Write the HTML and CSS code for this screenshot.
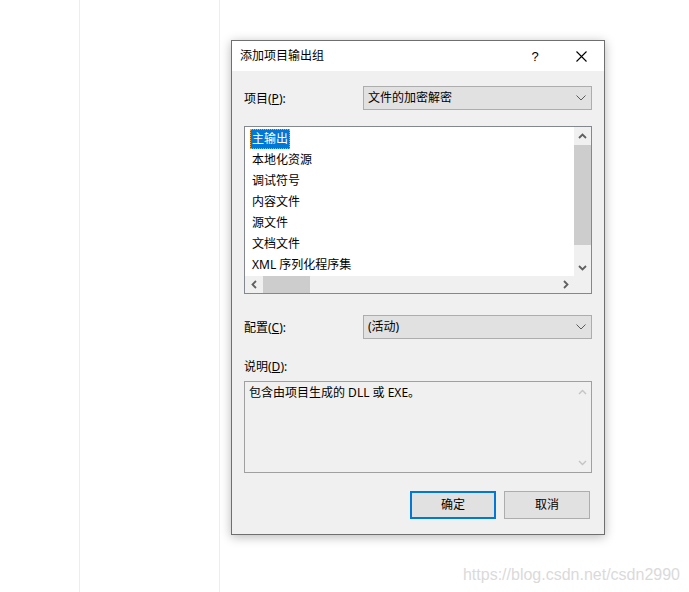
FILE: index.html
```html
<!DOCTYPE html>
<html lang="zh-CN">
<head>
<meta charset="utf-8">
<title>添加项目输出组</title>
<link rel="stylesheet" href="styles.css">
</head>
<body>
<div class="desk">
  <div class="col col-a"></div>
  <div class="col col-b"></div>
  <div class="col-c">
    <div class="dialog">
      <div class="titlebar">
        <span class="title">添加项目输出组</span>
        <span class="tb-btn help">?</span>
        <span class="tb-btn close">
          <svg width="11" height="11" viewBox="0 0 11 11"><path d="M0.5 0.5 L10.5 10.5 M10.5 0.5 L0.5 10.5" stroke="#000" stroke-width="1.1" fill="none"/></svg>
        </span>
      </div>
      <div class="body">
        <div class="row row-project">
          <span class="lbl">项目(<u>P</u>):</span>
          <div class="combo">
            <span class="combo-text">文件的加密解密</span>
            <svg class="combo-arrow" width="10" height="6" viewBox="0 0 10 6"><path d="M0.5 0.5 L5 5 L9.5 0.5" stroke="#5a5a5a" stroke-width="1" fill="none"/></svg>
          </div>
        </div>

        <div class="listbox">
          <div class="items">
            <div class="item"><span class="item-text selected">主输出</span></div>
            <div class="item"><span class="item-text">本地化资源</span></div>
            <div class="item"><span class="item-text">调试符号</span></div>
            <div class="item"><span class="item-text">内容文件</span></div>
            <div class="item"><span class="item-text">源文件</span></div>
            <div class="item"><span class="item-text">文档文件</span></div>
            <div class="item"><span class="item-text">XML 序列化程序集</span></div>
          </div>
          <div class="vscroll">
            <div class="sb-arrow"><svg width="9" height="6" viewBox="0 0 9 6"><path d="M1 5 L4.5 1.5 L8 5" stroke="#606060" stroke-width="1.8" fill="none"/></svg></div>
            <div class="vtrack"><div class="vthumb"></div></div>
            <div class="sb-arrow"><svg width="9" height="6" viewBox="0 0 9 6"><path d="M1 1 L4.5 4.5 L8 1" stroke="#606060" stroke-width="1.8" fill="none"/></svg></div>
          </div>
          <div class="hscroll">
            <div class="sb-arrow"><svg width="6" height="9" viewBox="0 0 6 9"><path d="M5 1 L1.5 4.5 L5 8" stroke="#606060" stroke-width="1.8" fill="none"/></svg></div>
            <div class="htrack"><div class="hthumb"></div></div>
            <div class="sb-arrow"><svg width="6" height="9" viewBox="0 0 6 9"><path d="M1 1 L4.5 4.5 L1 8" stroke="#606060" stroke-width="1.8" fill="none"/></svg></div>
          </div>
          <div class="corner"></div>
        </div>

        <div class="row row-config">
          <span class="lbl">配置(<u>C</u>):</span>
          <div class="combo">
            <span class="combo-text">(活动)</span>
            <svg class="combo-arrow" width="10" height="6" viewBox="0 0 10 6"><path d="M0.5 0.5 L5 5 L9.5 0.5" stroke="#5a5a5a" stroke-width="1" fill="none"/></svg>
          </div>
        </div>

        <div class="desc-label">说明(<u>D</u>):</div>
        <div class="descbox">
          <div class="desc-text">包含由项目生成的 DLL 或 EXE。</div>
          <div class="desc-scroll">
            <svg width="9" height="6" viewBox="0 0 9 6"><path d="M1 5 L4.5 1.5 L8 5" stroke="#c4c4c4" stroke-width="1.4" fill="none"/></svg>
            <svg width="9" height="6" viewBox="0 0 9 6"><path d="M1 1 L4.5 4.5 L8 1" stroke="#c4c4c4" stroke-width="1.4" fill="none"/></svg>
          </div>
        </div>

        <div class="buttons">
          <button class="btn btn-default">确定</button>
          <button class="btn">取消</button>
        </div>
      </div>
    </div>
  </div>
  <div class="watermark">https://blog.csdn.net/csdn2990</div>
</div>
</body>
</html>
```

FILE: styles.css
```css
html, body {
  margin: 0;
  padding: 0;
  background: #ffffff;
}

body {
  width: 689px;
  height: 592px;
  overflow: hidden;
  font-family: "Noto Sans", "Noto Sans CJK SC", sans-serif;
  font-size: 12px;
  color: #000;
}

.desk {
  position: relative;
  display: flex;
  height: 592px;
}

.col {
  height: 592px;
  border-right: 1px solid #e8eef6;
}

.col-a { width: 79px; }
.col-b { width: 139px; }

.col-c {
  padding-left: 11px;
  padding-top: 40px;
}

.dialog {
  box-sizing: border-box;
  width: 374px;
  height: 495px;
  border: 1px solid #6f6f6f;
  background: #f0f0f0;
  box-shadow: 0 2px 10px rgba(0, 0, 0, 0.28);
  display: flex;
  flex-direction: column;
}

.titlebar {
  height: 30px;
  background: #ffffff;
  display: flex;
  align-items: center;
}

.title {
  flex: 1;
  padding-left: 8px;
  line-height: 16px;
}

.tb-btn {
  width: 46px;
  height: 30px;
  display: flex;
  align-items: center;
  justify-content: center;
}

.help {
  font-family: "Liberation Sans", sans-serif;
  font-size: 13px;
}

.body {
  flex: 1;
  padding: 15px 12px 0 12px;
  display: flex;
  flex-direction: column;
}

.row {
  display: flex;
  align-items: center;
  height: 24px;
}

.lbl {
  width: 119px;
  line-height: 16px;
  padding-top: 2px;
}

.combo {
  box-sizing: border-box;
  flex: 1;
  height: 24px;
  border: 1px solid #adadad;
  background: #e1e1e1;
  display: flex;
  align-items: center;
  padding: 0 5px 0 4px;
}

.combo-text {
  flex: 1;
  line-height: 16px;
}

.combo-arrow {
  display: block;
}

.listbox {
  box-sizing: border-box;
  margin-top: 16px;
  height: 168px;
  border: 1px solid #828790;
  background: #ffffff;
  display: grid;
  grid-template-columns: 1fr 17px;
  grid-template-rows: 1fr 17px;
}

.items {
  padding: 1px 0 0 5px;
  overflow: hidden;
}

.item {
  height: 21px;
  display: flex;
  align-items: center;
}

.item-text {
  padding: 0 2px;
  line-height: 20px;
  height: 20px;
  white-space: nowrap;
}

.item-text.selected {
  background: #0078d7;
  color: #ffffff;
  outline: 1px dotted #f2a23a;
  outline-offset: -1px;
}

.vscroll {
  background: #f0f0f0;
  display: flex;
  flex-direction: column;
}

.sb-arrow {
  width: 17px;
  height: 17px;
  display: flex;
  align-items: center;
  justify-content: center;
  flex: none;
}

.vtrack {
  flex: 1;
  padding-top: 1px;
}

.vthumb {
  height: 100px;
  background: #cdcdcd;
}

.hscroll {
  background: #f0f0f0;
  display: flex;
}

.htrack {
  flex: 1;
  padding-left: 1px;
}

.hthumb {
  width: 47px;
  height: 17px;
  background: #cdcdcd;
}

.corner {
  background: #f0f0f0;
}

.row-config {
  margin-top: 21px;
}

.desc-label {
  margin-top: 20px;
  line-height: 16px;
  height: 16px;
}

.descbox {
  box-sizing: border-box;
  margin-top: 6px;
  height: 92px;
  border: 1px solid #a0a0a0;
  background: #f0f0f0;
  display: flex;
}

.desc-text {
  flex: 1;
  padding: 3px 0 0 4px;
  line-height: 16px;
}

.desc-scroll {
  width: 17px;
  display: flex;
  flex-direction: column;
  justify-content: space-between;
  align-items: center;
  padding: 7px 0 6px;
}

.buttons {
  margin-top: 18px;
  display: flex;
  justify-content: flex-end;
  gap: 8px;
  padding-right: 2px;
}

.btn {
  box-sizing: border-box;
  width: 86px;
  height: 28px;
  margin: 0;
  padding: 0;
  border: 1px solid #adadad;
  background: #e1e1e1;
  font-family: "Noto Sans", "Noto Sans CJK SC", sans-serif;
  font-size: 12px;
  color: #000;
  line-height: 16px;
}

.btn-default {
  border: 2px solid #0078d7;
}

.watermark {
  position: absolute;
  right: 9px;
  bottom: 8px;
  font-family: "Liberation Sans", Arial, sans-serif;
  font-size: 16px;
  line-height: 18px;
  color: #dadada;
}
```
